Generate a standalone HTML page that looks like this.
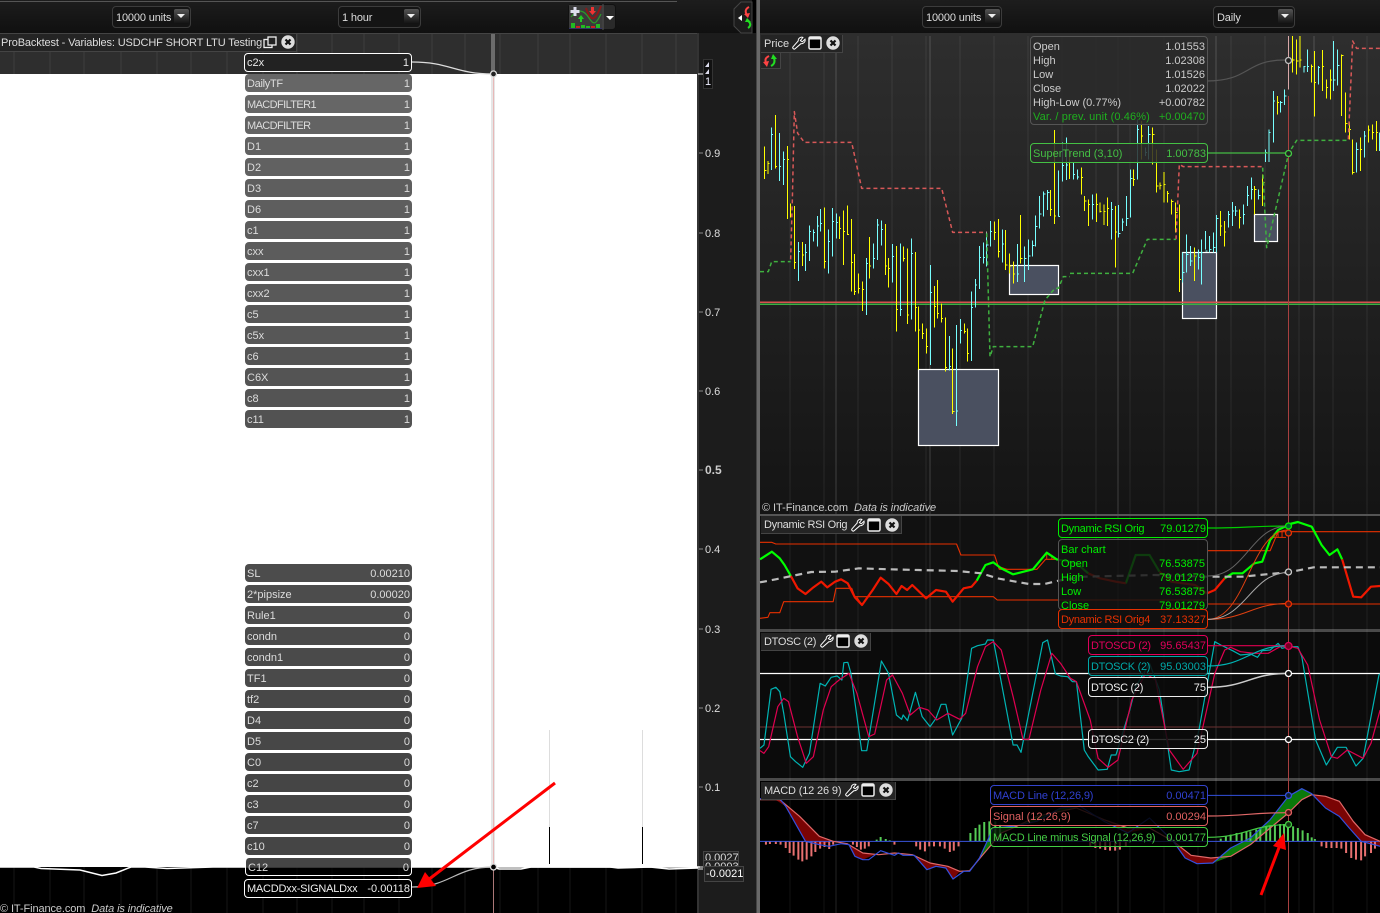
<!DOCTYPE html>
<html><head><meta charset="utf-8"><style>
html,body{margin:0;padding:0;width:1380px;height:913px;overflow:hidden;background:#111}
body{position:relative;font:11px/14px "Liberation Sans",Arial,sans-serif;color:#ddd}
.a{position:absolute}
.t{position:absolute;white-space:nowrap;margin-top:1px}
svg{position:absolute;left:0;top:0}
.n *{vector-effect:non-scaling-stroke;stroke-linejoin:round}
.r{position:absolute;left:245px;width:167px;height:18px;border-radius:4px;display:flex;justify-content:space-between;align-items:center;padding:2px 2px 0;box-sizing:border-box;color:#ddd;white-space:nowrap}
.l{position:absolute;box-sizing:border-box;border:1px solid;border-radius:4px;display:flex;justify-content:space-between;align-items:center;padding:2px 1px 0 2px;white-space:nowrap}
.sel{position:absolute;top:6px;height:22px;box-sizing:border-box;border:1px solid #3c3c3c;border-radius:4px;background:#141414;color:#ddd;padding:4px 0 0 3px;line-height:14px;letter-spacing:-.15px}
.sel i{position:absolute;right:1px;top:2px;width:15px;height:15px;border-radius:2px;background:linear-gradient(#555,#111)}
.sel i:after{content:"";position:absolute;left:3px;top:5px;border:4px solid transparent;border-top:4px solid #eee;border-bottom:0}
.pt{position:absolute;box-sizing:border-box;background:#242424;border:1px solid #444;border-left:0;border-top:0;white-space:nowrap;color:#ddd;padding:2px 0 0 3px}
.c{letter-spacing:-.3px}.d{letter-spacing:-.6px}
</style></head><body>
<!-- toolbars -->
<div class="a" style="left:0;top:0;width:760px;height:36px;background:linear-gradient(#1d1d1d,#0f0f0f)"></div>
<div class="a" style="left:760px;top:0;width:620px;height:36px;background:linear-gradient(#1d1d1d,#0f0f0f)"></div>
<div class="a" style="left:0;top:1px;width:677px;height:1px;background:#555"></div>
<div class="a" style="left:752px;top:0;width:5px;height:36px;background:#000"></div>
<!-- left panels -->
<div class="a" style="left:0;top:33px;width:697px;height:41px;background:#2e2e2e;border-top:1px solid #444;box-sizing:border-box"></div>
<div class="a" style="left:0;top:74px;width:698px;height:793px;background:#fff"></div>
<div class="a" style="left:0;top:867px;width:698px;height:46px;background:#000"></div>
<div class="a" style="left:697px;top:33px;width:59px;height:880px;background:#1c1c1c"></div>
<div class="a" style="left:697px;top:33px;width:2px;height:880px;background:#333"></div>
<div class="a" style="left:756px;top:0;width:4px;height:913px;background:#686868"></div>
<div class="a" style="left:756px;top:0;width:1px;height:913px;background:#444"></div>
<!-- right panels -->
<div class="a" style="left:760px;top:33px;width:620px;height:481px;background:linear-gradient(#2e2e2e,#141414)"></div>
<div class="a" style="left:760px;top:514px;width:620px;height:2px;background:#555"></div>
<div class="a" style="left:760px;top:516px;width:620px;height:113px;background:#111"></div>
<div class="a" style="left:760px;top:629px;width:620px;height:3px;background:#4a4a4a"></div>
<div class="a" style="left:760px;top:632px;width:620px;height:146px;background:#0b0b0b"></div>
<div class="a" style="left:760px;top:778px;width:620px;height:3px;background:#4a4a4a"></div>
<div class="a" style="left:760px;top:781px;width:620px;height:132px;background:#000"></div>

<svg width="1380" height="913" fill="none">
<defs>
<symbol id="w" viewBox="0 0 14 14"><path d="M13 3.2 10.3 5.8 8.4 4.6 10.9 1.4C8.6.6 6 2.2 6.2 5L1 10.8C0 12 1.9 13.9 3.1 12.8L8.9 7.7C11.6 8 13.7 5.6 13 3.2Z" fill="#222" stroke="#fff" stroke-width="1"/></symbol>
<symbol id="win" viewBox="0 0 14 14"><rect x="1" y="1" width="12" height="12" rx="1.5" fill="#000" stroke="#eee" stroke-width="1.5"/><rect x="1" y="1" width="12" height="2.5" fill="#eee"/></symbol>
<symbol id="x" viewBox="0 0 14 14"><circle cx="7" cy="7" r="6.7" fill="#ddd"/><path d="M4.5 4.5 9.5 9.5M9.5 4.5 4.5 9.5" stroke="#111" stroke-width="2.2"/></symbol>
</defs>
<!-- left grid -->
<path shape-rendering="crispEdges" d="M14 34V74M50 34V74M84 34V74M121 34V74M157 34V74M191 34V74M227 34V74M263 34V74M297 34V74M332 34V74M364 34V74M399 34V74M432 34V74M465 34V74M500 34V74M538 34V74M570 34V74M606 34V74M642 34V74M676 34V74" stroke="#3f3f3f"/>
<path shape-rendering="crispEdges" d="M14 867V913M50 867V913M84 867V913M121 867V913M157 867V913M191 867V913M227 867V913M263 867V913M297 867V913M332 867V913M364 867V913M399 867V913M432 867V913M465 867V913M500 867V913M538 867V913M570 867V913M606 867V913M642 867V913M676 867V913" stroke="#161616"/>
<path d="M549.5 730V827M642.5 730V827" stroke="#ddd"/>
<path d="M549.5 827V864M642.5 827V864" stroke="#000"/>
<!-- left crosshair -->
<rect x="491" y="34" width="4" height="40" fill="#6c6c6c"/>
<rect x="491" y="74" width="4" height="793" fill="#e6e6e6"/>
<path d="M493.5 74V867" stroke="#e8b8b8"/>
<path d="M493.5 867V913" stroke="#a77"/>
<!-- white line -->
<path d="M0 867H34L41 868.500 80 870 102 875.500 116 873 131 867H145L167 868.500 213 867H700" stroke="#fff" stroke-width="1.500"/>
<path d="M493 867 499 869H521L531 867 610 867 618 868 650 867 669 869 698 868" stroke="#fff" stroke-width="1.500"/>
<path d="M412 62C450 62 455 74 493 74" stroke="#ddd" stroke-width="1.200"/>
<path d="M412 887C450 887 455 867 493 867" stroke="#bbb" stroke-width="1.200"/>
<path d="M698 74H703M698 867H703M698 869H703" stroke="#eee"/>
<path d="M699 153H703M699 233H703M699 312H703M699 391H703M699 470H703M699 549H703M699 629H703M699 708H703M699 787H703" stroke="#888"/>
<!-- right grid -->
<path shape-rendering="crispEdges" d="M790 36V514M824 36V514M858 36V514M892 36V514M926 36V514M960 36V514M994 36V514M1028 36V514M1062 36V514M1096 36V514M1130 36V514M1164 36V514M1198 36V514M1231 36V514M1265 36V514M1299 36V514M1333 36V514M1367 36V514" stroke="#fff" stroke-opacity=".08"/>
<path shape-rendering="crispEdges" d="M836 36V514M930 36V514M1118 36V514M1216 36V514M1314 36V514" stroke="#fff" stroke-opacity=".18"/>
<path shape-rendering="crispEdges" d="M790 516V913M824 516V913M858 516V913M892 516V913M926 516V913M960 516V913M994 516V913M1028 516V913M1062 516V913M1096 516V913M1130 516V913M1164 516V913M1198 516V913M1231 516V913M1265 516V913M1299 516V913M1333 516V913M1367 516V913" stroke="#fff" stroke-opacity=".07"/>
<path shape-rendering="crispEdges" d="M836 516V913M930 516V913M1118 516V913M1216 516V913M1314 516V913" stroke="#fff" stroke-opacity=".14"/>
<!-- price boxes -->
<g fill="#4a5060" stroke="#fff" stroke-width="1.200"><rect x="918.500" y="369.500" width="80" height="76"/><rect x="1009.500" y="265.500" width="49" height="29"/><rect x="1182.500" y="252.500" width="34" height="66"/><rect x="1254.500" y="214.500" width="23" height="27"/></g>
<!-- horizontal -->
<rect x="760" y="301.500" width="620" height="1.500" fill="#d85050"/>
<rect x="760" y="303.500" width="620" height="1.500" fill="#3cb043"/>
<!-- bars left half -->
<g transform="translate(760,100) scale(.33333)" class="n" stroke-width="1" shape-rendering="crispEdges">
<path stroke="#ff0" d="M14 140V237M14 212h5M24 183V222M24 190h5M46 45V205M46 200h5M82 138V357M82 178h5M91 310V353M91 345h5M103 318V507M103 488h5M127 426V498M127 465h5M193 322V505M193 485h5M238 350V417M238 385h5M250 332V495M250 395h5M262 316V405M262 403h5M274 357V575M274 487h5M283 462V585M283 575h5M295 520V580M295 565h5M307 544V633M307 568h5M328 411V535M328 498h5M376 372V525M376 498h5M385 474V563M385 505h5M409 438V695M409 628h5M430 440V485M430 475h5M442 445V672M442 645h5M466 456V695M466 622h5M475 620V808M475 690h5M487 670V717M487 700h5M499 685V760M499 740h5M523 558V683M523 620h5M532 540V655M532 640h5M544 610V668M544 655h5M556 652V815M556 803h5M578 745V942M578 935h5M613 670V700M613 695h5M622 685V785M622 760h5M703 365V420M703 398h5M715 357V472M715 455h5M737 390V510M737 495h5M749 460V520M749 498h5M760 484V550M760 522h5M782 345V490M782 475h5M871 270V348M871 328h5M883 90V372M883 348h5M928 150V237M928 160h5"/>
<path stroke="#7ff" d="M34 82V210M34 103h5M58 99V243M58 199h5M70 155V255M70 178h5M115 426V543M115 455h5M136 432V513M136 458h5M148 376V483M148 395h5M160 388V425M160 398h5M172 348V440M172 378h5M181 327V395M181 370h5M205 388V521M205 425h5M217 324V470M217 365h5M229 340V415M229 368h5M319 474V645M319 490h5M340 430V505M340 475h5M352 357V480M352 375h5M364 362V436M364 388h5M397 432V548M397 470h5M421 430V648M421 628h5M454 415V658M454 460h5M511 495V795M511 578h5M568 708V812M568 800h5M589 675V978M589 933h5M601 657V730M601 692h5M634 574V783M634 622h5M646 537V622M646 555h5M658 438V567M658 472h5M670 427V490M670 472h5M680 395V500M680 435h5M691 363V440M691 395h5M727 388V487M727 432h5M772 432V546M772 522h5M794 440V546M794 475h5M806 418V510M806 468h5M818 422V470M818 436h5M827 347V440M827 380h5M839 288V386M839 342h5M851 275V350M851 282h5M863 270V330M863 278h5M895 212V350M895 350h5M907 128V245M907 196h5M919 112V240M919 195h5"/>
<path stroke="#d85858" stroke-width="1.500" stroke-dasharray="4 3" shape-rendering="auto" d="M92 478 97 300 103 35 113 100 133 127H275L305 265H545L578 397H680"/>
<path stroke="#3fb03f" stroke-width="1.500" stroke-dasharray="4 3" shape-rendering="auto" d="M0 515H25L35 485H92M680 400 690 770 700 740H818L855 600 885 565H895L910 530H930"/>
</g>
<!-- bars right half -->
<g transform="translate(1070,36) scale(.33333)" class="n" stroke-width="1" shape-rendering="crispEdges">
<path stroke="#ff0" d="M34 395V475M34 425h5M44 480V525M44 495h5M55 490V570M55 505h5M79 472V558M79 505h5M90 500V530M90 526h5M102 505V567M102 526h5M112 484V570M112 518h5M136 510V695M136 588h5M190 400V450M190 430h5M214 255V370M214 300h5M248 275V385M248 295h5M260 340V470M260 450h5M270 440V460M270 448h5M282 408V500M282 445h5M292 465V500M292 472h5M305 490V535M305 497h5M317 500V590M317 530h5M328 505V768M328 730h5M374 635V735M374 660h5M451 525V600M451 570h5M463 555V632M463 588h5M508 520V578M508 545h5M554 450V535M554 460h5M578 415V510M578 440h5M622 180V235M622 200h5M668 0V110M668 72h5M680 10V115M680 75h5M690 0V95M690 72h5M724 85V140M724 92h5M733 45V242M733 140h5M757 42V165M757 92h5M769 130V188M769 155h5M781 100V190M781 132h5M815 55V240M815 58h5M827 170V290M827 262h5M838 260V310M838 280h5M848 310V415M848 410h5M871 305V405M871 340h5M895 268V320M895 282h5M907 265V310M907 290h5M919 255V345M919 290h5"/>
<path stroke="#7ff" d="M10 380V430M10 415h5M22 400V430M22 423h5M67 475V550M67 505h5M124 498V610M124 520h5M146 507V605M146 592h5M157 548V585M157 558h5M170 480V570M170 548h5M182 400V545M182 428h5M202 250V430M202 280h5M226 335V360M226 350h5M236 270V370M236 295h5M338 650V740M338 710h5M350 595V710M350 655h5M362 630V690M362 675h5M385 640V700M385 665h5M394 610V745M394 650h5M407 585V640M407 645h5M419 600V650M419 640h5M431 590V650M431 635h5M440 537V650M440 548h5M475 525V575M475 535h5M487 498V570M487 525h5M497 510V540M497 525h5M520 505V565M520 535h5M532 450V510M532 478h5M544 425V490M544 460h5M566 460V490M566 478h5M586 340V378M586 350h5M597 280V378M597 290h5M610 165V320M610 195h5M632 195V230M632 200h5M644 160V207M644 180h5M702 90V110M702 92h5M712 40V108M712 92h5M745 90V145M745 95h5M791 15V165M791 132h5M803 40V148M803 88h5M860 320V410M860 340h5M883 285V365M883 300h5M928 290V345M928 340h5"/>
<path stroke="#d8a8a8" d="M656 0V160"/>
<path stroke="#d85858" stroke-width="1.500" stroke-dasharray="4 3" shape-rendering="auto" d="M318 610 328 385 340 392H578M835 310 848 15 860 37H930"/>
<path stroke="#3fb03f" stroke-width="1.500" stroke-dasharray="4 3" shape-rendering="auto" d="M0 712H188L232 610H318M578 395 590 635 656 352 680 313H835"/>
</g>
<!-- price crosshair + connectors -->
<path d="M1288.500 96V913" stroke="#a84040"/>
<path d="M1207 81C1250 81 1245 60 1285 60" stroke="#555" stroke-width="1.200"/>
<path d="M1207 153H1285" stroke="#44bb44" stroke-width="1.200"/>

<!-- RSI -->
<g transform="translate(760,510) scale(.39548,.33333)" class="n">
<path stroke="#e83000" stroke-width="1.100" d="M0 97H30L40 102H497L508 135H593L605 178H700L722 148H755M0 325 20 322 25 308H50L60 275H185L192 235H232L240 260H590L600 270H1132M1132 122H1290L1310 65H1568M1132 282H1568"/>
<path stroke="#e83000" d="M605 170 625 178M245 262 258 285 272 262M1300 70V82M1310 62V82M1320 62V82M1290 82H1330M725 130V148M738 135V148"/>
<path stroke="#0f0" stroke-width="2.200" d="M0 148 30 125 50 145 62 165 78 198M548 212 570 165 590 157 610 175 640 193 690 178 725 128 750 148 800 160 830 190M925 220 950 135H985L1010 185M1175 205 1195 190H1220L1250 160 1270 155 1290 90 1310 60 1340 42 1360 36 1395 50 1420 105 1440 135 1460 118 1472 148"/>
<path stroke="#f01800" stroke-width="2.200" d="M78 198 95 235 115 252 135 232 155 215 170 232 190 215 205 208 222 220 240 262 258 285 285 240 305 203 325 222 345 252 358 228 372 240 385 225 420 265 445 240 470 245 487 275 515 235 535 230 548 212M830 190 860 205 900 215 925 220M1010 185 1040 215 1100 225 1130 250 1150 240 1175 205M1472 148 1490 220 1500 260 1520 262 1545 230 1568 228"/>
<path stroke="#bbb" stroke-width="2.200" stroke-dasharray="7 5" d="M0 217 40 208 80 198 130 186 190 185 250 175 330 178 400 180 500 183 560 190 600 205 680 222 720 222 755 212 820 200 1000 195 1130 200 1220 200 1280 193 1336 187 1400 172 1568 172"/>
<path stroke="#0c0" stroke-width="1.200" d="M1132 54C1230 54 1240 48 1336 48"/>
<path stroke="#666" d="M1132 198C1230 198 1240 48 1336 48"/>
<path stroke="#e04010" d="M1132 328C1230 328 1240 60 1336 60M1132 328C1230 328 1240 282 1336 280"/>
<path stroke="#aaa" d="M1132 328C1230 328 1240 190 1336 187"/>
</g>
<!-- DTOSC -->
<path d="M760 727H1380" stroke="#6b3030"/>
<path d="M760 673.500H1380M760 739.500H1380" stroke="#fff" stroke-width="1.200"/>
<g transform="translate(760,630) scale(.39548,.33333)" class="n">
<path stroke="#00b4b4" stroke-width="1.200" d="M0 355 10 345 28 178 40 172 50 185 60 250 77 380 90 395 108 412 125 370 152 160 165 168 180 142 195 138 207 150 212 98 222 97 230 130 257 362 270 362 307 93 325 130 345 255 358 268 362 255 373 272 393 187 410 260 430 290 445 265 458 223 470 223 487 315 510 265 535 55 550 47 570 42 575 30 590 30 640 345 650 345 660 367 715 38 727 30 747 132 760 138 778 140 790 155 800 155 820 360 830 380 855 420 878 418 888 375 900 375 935 240 950 170 985 100 1010 180 1040 420 1060 425 1085 420 1110 300 1150 35 1165 45 1195 62 1215 75 1240 72 1258 82 1270 62 1290 60 1310 40 1320 55 1336 50 1360 50 1370 80 1405 330 1432 405 1460 352 1482 352 1507 408 1525 385 1565 135 1568 132"/>
<path stroke="#e00050" stroke-width="1.200" d="M0 362 10 370 22 350 45 230 60 205 72 215 95 320 117 400 135 380 160 240 180 170 200 150 225 130 245 190 275 320 290 312 320 150 335 135 360 190 380 255 403 232 425 240 447 270 475 250 505 268 520 250 550 110 570 50 590 35 610 60 640 200 665 328 680 328 710 180 738 70 760 100 785 145 800 155 835 270 855 385 880 412 905 390 940 210 975 130 1000 150 1035 360 1070 418 1105 370 1150 130 1175 60 1190 52 1215 65 1250 70 1285 70 1315 50 1336 48 1360 55 1385 105 1415 270 1445 380 1460 385 1485 360 1525 385 1545 340 1568 240"/>
<path stroke="#e00050" stroke-width="1.200" d="M1132 47H1336"/>
<path stroke="#00b4b4" stroke-width="1.200" d="M1132 108C1230 108 1240 47 1336 47"/>
<path stroke="#ccc" stroke-width="1.500" d="M1132 172C1230 172 1240 130 1336 130"/>
</g>
<!-- MACD -->
<g transform="translate(760,778) scale(.39548,.33333)" class="n">
<path fill="#7a0404" d="M35 62H50L100 115 150 175 185 190 150 200 115 190 65 85ZM225 200 260 225 290 230 260 245 240 235ZM390 232 430 255 475 265 505 280 488 303 470 270 445 265 422 275ZM870 125 930 155 985 150 1045 190 1075 240 1105 257 1145 255 1190 235 1140 240 1090 232 1045 190 985 150 930 165ZM1395 50 1430 55 1465 70 1500 130 1530 170 1568 190V205L1520 190 1490 150 1465 115 1430 90Z"/>
<path fill="#0a7a0a" d="M530 278 555 240 590 150 640 145 700 130 760 90 810 85 800 90 700 115 640 150 610 165 560 235ZM1145 255 1190 210 1240 180 1290 125 1336 55 1370 32 1395 47 1395 50 1370 65 1336 105 1290 150 1240 200 1190 235Z"/>
<path stroke="#5c5" d="M295 190V185M305 190V177M318 190V183M328 190V187M532 190V165M545 190V150M555 190V140M567 190V132M580 190V130M595 190V130M607 190V140M1165 190V182M1178 190V175M1190 190V170M1205 190V165M1218 190V165M1230 190V160M1240 190V160M1255 190V155M1265 190V150M1280 190V145M1290 190V142M1302 190V142M1315 190V138M1325 190V138M1335 190V140M1348 190V145M1360 190V150M1372 190V157M1385 190V165M1395 190V178M1403 190V183" stroke-width="2"/>
<path stroke="#e87070" stroke-width="2" d="M15 190V200M25 190V198M40 190V198M52 190V200M65 190V210M75 190V225M85 190V233M97 190V245M107 190V250M118 190V245M130 190V235M140 190V222M152 190V212M163 190V207M175 190V213M185 190V200M235 190V200M245 190V207M255 190V215M265 190V212M275 190V205M340 190V200M395 190V205M405 190V215M417 190V220M428 190V205M440 190V205M455 190V205M467 190V212M480 190V222M490 190V218M502 190V205M835 190V205M848 190V210M860 190V212M873 190V216M885 190V218M898 190V218M910 190V215M925 190V205M1420 190V205M1432 190V210M1445 190V210M1458 190V210M1470 190V212M1482 190V225M1495 190V240M1507 190V245M1520 190V247M1530 190V235M1545 190V225M1555 190V212"/>
<path stroke="#3a55dd" d="M0 190H1568"/>
<path stroke="#e06868" stroke-width="1.200" d="M0 65H50L100 115 150 175 185 190 220 197 260 225 300 230 340 225 385 230 430 255 475 265 505 280 530 278 560 235 610 165 640 150 700 115 800 90 870 125 930 150 985 150 1045 190 1090 232 1140 240 1190 235 1240 200 1290 150 1336 105 1370 65 1395 50 1430 55 1465 70 1500 130 1530 170 1568 190"/>
<path stroke="#3350dd" stroke-width="1.200" d="M0 62H50L65 85 115 190 150 200 175 205 205 197 225 200 240 235 260 245H275L305 218 340 232 350 225 362 232H390L422 275 445 265 470 270 488 303 515 280H530L555 240 590 150 640 145 700 130 760 90 810 85 870 130 930 165 985 120 1045 190 1075 240 1105 257 1145 255 1190 210 1240 180 1290 125 1336 55 1370 32 1395 47 1430 90 1465 115 1490 150 1520 190 1568 205"/>
<path stroke="#3350dd" d="M1132 52H1336"/>
<path stroke="#e06868" stroke-width="1.200" d="M1132 114C1230 114 1240 104 1336 104"/>
<path stroke="#44cc44" stroke-width="1.200" d="M1132 178C1230 178 1240 140 1336 140"/>
</g>
</svg>

<!-- left variable rows -->
<div class="a" style="left:244px;top:53px;width:168px;height:19px;box-sizing:border-box;border:1px solid #fff;border-radius:4px;background:#222;display:flex;justify-content:space-between;align-items:center;padding:0 2px 0 2px;color:#e8e8e8"><span>c2x</span><span>1</span></div>
<div class="r" style="top:74px;background:rgba(0,0,0,.6)"><span class="c">DailyTF</span><span>1</span></div>
<div class="r" style="top:95px;background:rgba(0,0,0,.6)"><span class="d">MACDFILTER1</span><span>1</span></div>
<div class="r" style="top:116px;background:rgba(0,0,0,.61)"><span class="d">MACDFILTER</span><span>1</span></div>
<div class="r" style="top:137px;background:rgba(0,0,0,.62)"><span>D1</span><span>1</span></div>
<div class="r" style="top:158px;background:rgba(0,0,0,.62)"><span>D2</span><span>1</span></div>
<div class="r" style="top:179px;background:rgba(0,0,0,.63)"><span>D3</span><span>1</span></div>
<div class="r" style="top:200px;background:rgba(0,0,0,.63)"><span>D6</span><span>1</span></div>
<div class="r" style="top:221px;background:rgba(0,0,0,.64)"><span>c1</span><span>1</span></div>
<div class="r" style="top:242px;background:rgba(0,0,0,.64)"><span>cxx</span><span>1</span></div>
<div class="r" style="top:263px;background:rgba(0,0,0,.65)"><span>cxx1</span><span>1</span></div>
<div class="r" style="top:284px;background:rgba(0,0,0,.65)"><span>cxx2</span><span>1</span></div>
<div class="r" style="top:305px;background:rgba(0,0,0,.66)"><span>c5</span><span>1</span></div>
<div class="r" style="top:326px;background:rgba(0,0,0,.66)"><span>c5x</span><span>1</span></div>
<div class="r" style="top:347px;background:rgba(0,0,0,.67)"><span>c6</span><span>1</span></div>
<div class="r" style="top:368px;background:rgba(0,0,0,.67)"><span>C6X</span><span>1</span></div>
<div class="r" style="top:389px;background:rgba(0,0,0,.67)"><span>c8</span><span>1</span></div>
<div class="r" style="top:410px;background:rgba(0,0,0,.68)"><span>c11</span><span>1</span></div>
<div class="r" style="top:564px;background:rgba(0,0,0,.7)"><span>SL</span><span>0.00210</span></div>
<div class="r" style="top:585px;background:rgba(0,0,0,.7)"><span>2*pipsize</span><span>0.00020</span></div>
<div class="r" style="top:606px;background:rgba(0,0,0,.7)"><span>Rule1</span><span>0</span></div>
<div class="r" style="top:627px;background:rgba(0,0,0,.71)"><span>condn</span><span>0</span></div>
<div class="r" style="top:648px;background:rgba(0,0,0,.71)"><span>condn1</span><span>0</span></div>
<div class="r" style="top:669px;background:rgba(0,0,0,.71)"><span>TF1</span><span>0</span></div>
<div class="r" style="top:690px;background:rgba(0,0,0,.72)"><span>tf2</span><span>0</span></div>
<div class="r" style="top:711px;background:rgba(0,0,0,.72)"><span>D4</span><span>0</span></div>
<div class="r" style="top:732px;background:rgba(0,0,0,.72)"><span>D5</span><span>0</span></div>
<div class="r" style="top:753px;background:rgba(0,0,0,.73)"><span>C0</span><span>0</span></div>
<div class="r" style="top:774px;background:rgba(0,0,0,.73)"><span>c2</span><span>0</span></div>
<div class="r" style="top:795px;background:rgba(0,0,0,.73)"><span>c3</span><span>0</span></div>
<div class="r" style="top:816px;background:rgba(0,0,0,.73)"><span>c7</span><span>0</span></div>
<div class="r" style="top:837px;background:rgba(0,0,0,.73)"><span>c10</span><span>0</span></div>
<div class="r" style="top:858px;background:rgba(0,0,0,.73);border:1px solid #fff;border-top:0"><span>C12</span><span>0</span></div>
<div class="a" style="left:244px;top:879px;width:168px;height:19px;box-sizing:border-box;border:1px solid #fff;border-radius:4px;background:#000;display:flex;justify-content:space-between;align-items:center;padding:0 1px 0 2px;color:#eee;white-space:nowrap"><span style="letter-spacing:-.23px">MACDDxx-SIGNALDxx</span><span>-0.00118</span></div>

<!-- left title -->
<div class="pt" style="left:0;top:34px;width:297px;height:18px;padding-left:1px;letter-spacing:-.14px">ProBacktest - Variables: USDCHF SHORT LTU Testing</div>
<svg width="1380" height="913" fill="none" style="pointer-events:none">
<rect x="264" y="39.500" width="8" height="8" fill="#222" stroke="#eee" stroke-width="1.300"/><rect x="268" y="37" width="8" height="8" fill="#222" stroke="#eee" stroke-width="1.300"/>
<use href="#x" x="281" y="35" width="14" height="14"/>
</svg>

<!-- axis labels left -->
<div class="t" style="left:705px;top:146px">0.9</div>
<div class="t" style="left:705px;top:226px">0.8</div>
<div class="t" style="left:705px;top:305px">0.7</div>
<div class="t" style="left:705px;top:384px">0.6</div>
<div class="t" style="left:705px;top:462px;font-size:12px;font-weight:bold;color:#ccc">0.5</div>
<div class="t" style="left:705px;top:542px">0.4</div>
<div class="t" style="left:705px;top:622px">0.3</div>
<div class="t" style="left:705px;top:701px">0.2</div>
<div class="t" style="left:705px;top:780px">0.1</div>
<div class="a" style="left:703px;top:59px;width:10px;height:30px;background:#111;border:1px solid #333;box-sizing:border-box"></div>
<div class="t" style="left:705px;top:74px;color:#eef">1</div>
<svg width="1380" height="913"><path d="M705 67 709 62V67ZM705 74 709 69V74Z" fill="#dde"/></svg>
<div class="a" style="left:703px;top:851px;width:36px;height:11px;background:#222;border:1px solid #444;box-sizing:border-box;overflow:hidden;padding:0 1px;line-height:13px">0.0027</div>
<div class="a" style="left:703px;top:860px;width:36px;height:8px;background:#222;border:1px solid #444;box-sizing:border-box;overflow:hidden;padding:0 1px;line-height:12px">0.0003</div>
<div class="a" style="left:704px;top:866px;width:40px;height:16px;background:#222;border:1px solid #444;box-sizing:border-box;color:#fff;padding-left:1px;line-height:14px">-0.0021</div>

<!-- toolbars content -->
<div class="sel" style="left:112px;width:79px">10000 units<i></i></div>
<div class="sel" style="left:338px;width:83px">1 hour<i></i></div>
<div class="sel" style="left:922px;width:80px">10000 units<i></i></div>
<div class="sel" style="left:1213px;width:82px">Daily<i></i></div>
<svg width="1380" height="913" fill="none">
<rect x="568.500" y="4.500" width="47" height="25" rx="3" fill="#2a2a2a" stroke="#111"/>
<rect x="569" y="5" width="33" height="24" fill="#3a3a3a"/>
<path d="M603 4V30" stroke="#555"/>
<path d="M606 16H614L610 20Z" fill="#fff"/>
<path d="M586 8C590 20 594 24 601 6" stroke="#8a1818" stroke-width="2"/>
<path d="M571 17C578 8 584 10 589 18S596 24 601 14" stroke="#2a9a2a" stroke-width="1.200"/>
<path d="M575 7V16M570.500 11.500H579.500" stroke="#dde" stroke-width="3"/>
<path d="M591 7h3v4h2l-3.500 4-3.500-4h2Z" fill="#e33"/>
<path d="M580 22v-3h-2l3-4 3 4h-2v3Z" fill="#2c2"/>
<rect x="571" y="23" width="4" height="5" fill="#2b2"/><rect x="576" y="26" width="4" height="2" fill="#c22"/><rect x="581" y="25" width="4" height="3" fill="#2b2"/><rect x="586" y="26" width="4" height="2" fill="#2b2"/><rect x="591" y="26" width="4" height="2" fill="#c22"/><rect x="596" y="24" width="4" height="4" fill="#2b2"/>
<rect x="569" y="28" width="33" height="1" fill="#336"/>
<path d="M752 2H741L734 9V26L741 33H752Z" fill="#1c1c1c" stroke="#444"/>
<path d="M738 18 742 15V21Z" fill="#fff"/>
<path d="M749 7C745 9 745 12 747 15" stroke="#f44" stroke-width="2"/><path d="M744 14 750 13 748 18Z" fill="#f44"/>
<path d="M748 28C751 26 751 23 748 21" stroke="#2d2" stroke-width="2"/><path d="M745 22 751 22 747 18Z" fill="#2d2"/>
</svg>

<!-- price legends -->
<div class="a" style="left:1030px;top:36px;width:178px;height:89px;box-sizing:border-box;border:1px solid #555;border-radius:4px;background:rgba(42,42,42,.88)"></div>
<div class="t" style="left:1033px;top:39px;color:#ccc">Open</div><div class="t" style="right:175px;top:39px;color:#ccc">1.01553</div>
<div class="t" style="left:1033px;top:53px;color:#ccc">High</div><div class="t" style="right:175px;top:53px;color:#ccc">1.02308</div>
<div class="t" style="left:1033px;top:67px;color:#ccc">Low</div><div class="t" style="right:175px;top:67px;color:#ccc">1.01526</div>
<div class="t" style="left:1033px;top:81px;color:#ccc">Close</div><div class="t" style="right:175px;top:81px;color:#ccc">1.02022</div>
<div class="t" style="left:1033px;top:95px;color:#ccc">High-Low (0.77%)</div><div class="t" style="right:175px;top:95px;color:#ccc">+0.00782</div>
<div class="t" style="left:1033px;top:109px;color:#1fb01f;letter-spacing:.12px">Var. / prev. unit (0.46%)</div><div class="t" style="right:175px;top:109px;color:#1fb01f">+0.00470</div>
<div class="l" style="left:1030px;top:143px;width:178px;height:20px;border-color:#44c044;color:#44c044;background:rgba(42,42,42,.85)"><span>SuperTrend (3,10)</span><span>1.00783</span></div>
<div class="t" style="left:762px;top:500px;color:#ccc;letter-spacing:-.06px">© IT-Finance.com&nbsp;<i>&nbsp;Data is indicative</i></div>
<div class="t" style="left:0;top:901px;color:#ccc;letter-spacing:-.1px">© IT-Finance.com&nbsp;<i>&nbsp;Data is indicative</i></div>

<!-- RSI legends -->
<div class="l" style="left:1058px;top:518px;width:150px;height:20px;border-color:#0e0;color:#0e0;background:rgba(17,17,17,.85)"><span class="c">Dynamic RSI Orig</span><span>79.01279</span></div>
<div class="a" style="left:1058px;top:539px;width:150px;height:71px;box-sizing:border-box;border:1px solid #555;border-radius:4px;background:rgba(17,17,17,.82)"></div>
<div class="t" style="left:1061px;top:542px;color:#0e0">Bar chart</div>
<div class="t" style="left:1061px;top:556px;color:#0e0">Open</div><div class="t" style="right:175px;top:556px;color:#0e0">76.53875</div>
<div class="t" style="left:1061px;top:570px;color:#0e0">High</div><div class="t" style="right:175px;top:570px;color:#0e0">79.01279</div>
<div class="t" style="left:1061px;top:584px;color:#0e0">Low</div><div class="t" style="right:175px;top:584px;color:#0e0">76.53875</div>
<div class="t" style="left:1061px;top:598px;color:#0e0">Close</div><div class="t" style="right:175px;top:598px;color:#0e0">79.01279</div>
<div class="l" style="left:1058px;top:609px;width:150px;height:20px;border-color:#e83000;color:#e83000;background:rgba(17,17,17,.85)"><span class="c">Dynamic RSI Orig4</span><span>37.13327</span></div>

<!-- DTOSC legends -->
<div class="l" style="left:1088px;top:635px;width:120px;height:20px;border-color:#e0005a;color:#e0005a;background:rgba(11,11,11,.85)"><span class="c">DTOSCD (2)</span><span>95.65437</span></div>
<div class="l" style="left:1088px;top:656px;width:120px;height:20px;border-color:#00a8a8;color:#00a8a8;background:rgba(11,11,11,.85)"><span class="c">DTOSCK (2)</span><span>95.03003</span></div>
<div class="l" style="left:1088px;top:677px;width:120px;height:20px;border-color:#eee;color:#eee;background:rgba(11,11,11,.85)"><span class="c">DTOSC (2)</span><span>75</span></div>
<div class="l" style="left:1088px;top:729px;width:120px;height:20px;border-color:#eee;color:#eee;background:rgba(11,11,11,.85)"><span class="c">DTOSC2 (2)</span><span>25</span></div>

<!-- MACD legends -->
<div class="l" style="left:990px;top:785px;width:218px;height:20px;border-color:#3344cc;color:#3040d0;background:rgba(0,0,0,.85)"><span style="letter-spacing:-.16px">MACD Line (12,26,9)</span><span>0.00471</span></div>
<div class="l" style="left:990px;top:806px;width:218px;height:20px;border-color:#e06060;color:#e06060;background:rgba(0,0,0,.85)"><span>Signal (12,26,9)</span><span>0.00294</span></div>
<div class="l" style="left:990px;top:827px;width:218px;height:20px;border-color:#44cc44;color:#44cc44;background:rgba(0,0,0,.75)"><span style="letter-spacing:-.22px">MACD Line minus Signal (12,26,9)</span><span>0.00177</span></div>

<!-- panel titles -->
<div class="pt" style="left:761px;top:35px;width:82px;height:18px">Price</div>
<div class="pt" style="left:761px;top:53px;width:20px;height:16px"></div>
<div class="pt c" style="left:761px;top:516px;width:141px;height:18px">Dynamic RSI Orig</div>
<div class="pt c" style="left:761px;top:633px;width:110px;height:18px">DTOSC (2)</div>
<div class="pt" style="left:761px;top:782px;width:135px;height:18px;letter-spacing:-.15px">MACD (12 26 9)</div>

<svg width="1380" height="913" fill="none">
<use href="#w" x="792" y="36" width="14" height="14"/><use href="#win" x="808" y="36" width="14" height="14"/><use href="#x" x="826" y="36" width="14" height="14"/>
<use href="#w" x="851" y="518" width="14" height="14"/><use href="#win" x="867" y="518" width="14" height="14"/><use href="#x" x="885" y="518" width="14" height="14"/>
<use href="#w" x="820" y="634" width="14" height="14"/><use href="#win" x="836" y="634" width="14" height="14"/><use href="#x" x="854" y="634" width="14" height="14"/>
<use href="#w" x="845" y="783" width="14" height="14"/><use href="#win" x="861" y="783" width="14" height="14"/><use href="#x" x="879" y="783" width="14" height="14"/>
<path d="M769 56C765 58 765 60 766 63" stroke="#f44" stroke-width="2"/><path d="M763 62 769 61 767 67Z" fill="#f44"/>
<path d="M771 66C775 64 775 61 774 58" stroke="#2d2" stroke-width="2"/><path d="M771 59 777 59 773 54Z" fill="#2d2"/>
<!-- dots -->
<g stroke-width="1.300" fill="#222">
<circle cx="1288.500" cy="60.500" r="3" stroke="#bbb"/><circle cx="1288.500" cy="153.500" r="3" stroke="#4c4"/>
<circle cx="1288.500" cy="533" r="3" stroke="#e83000"/><circle cx="1288.500" cy="526" r="3" stroke="#0e0" fill="#063"/><circle cx="1288.500" cy="572" r="3" stroke="#ccc"/><circle cx="1288.500" cy="604" r="3" stroke="#e83000" fill="#511"/>
<circle cx="1288.500" cy="646" r="3.500" stroke="#e0005a" fill="#702"/><circle cx="1288.500" cy="673.500" r="3" stroke="#fff" fill="#111"/><circle cx="1288.500" cy="739.500" r="3" stroke="#fff" fill="#111"/>
<circle cx="1288.500" cy="795.500" r="3" stroke="#3350dd" fill="#123"/><circle cx="1288.500" cy="812.500" r="3" stroke="#e06060" fill="#411"/><circle cx="1288.500" cy="824.500" r="3" stroke="#4c4" fill="#131"/>
<circle cx="493.500" cy="74" r="3" fill="#222" stroke="#ddd"/><circle cx="493.500" cy="867" r="3" fill="#000" stroke="#ddd"/>
</g>
<!-- arrows -->
<path d="M555 783 428 880" stroke="#f00" stroke-width="3"/><path d="M417 888 425 872 436 886Z" fill="#f00"/>
<path d="M1261 895 1280 845" stroke="#f00" stroke-width="3"/><path d="M1284 833 1273 846 1286 850Z" fill="#f00"/>
</svg>
</body></html>
